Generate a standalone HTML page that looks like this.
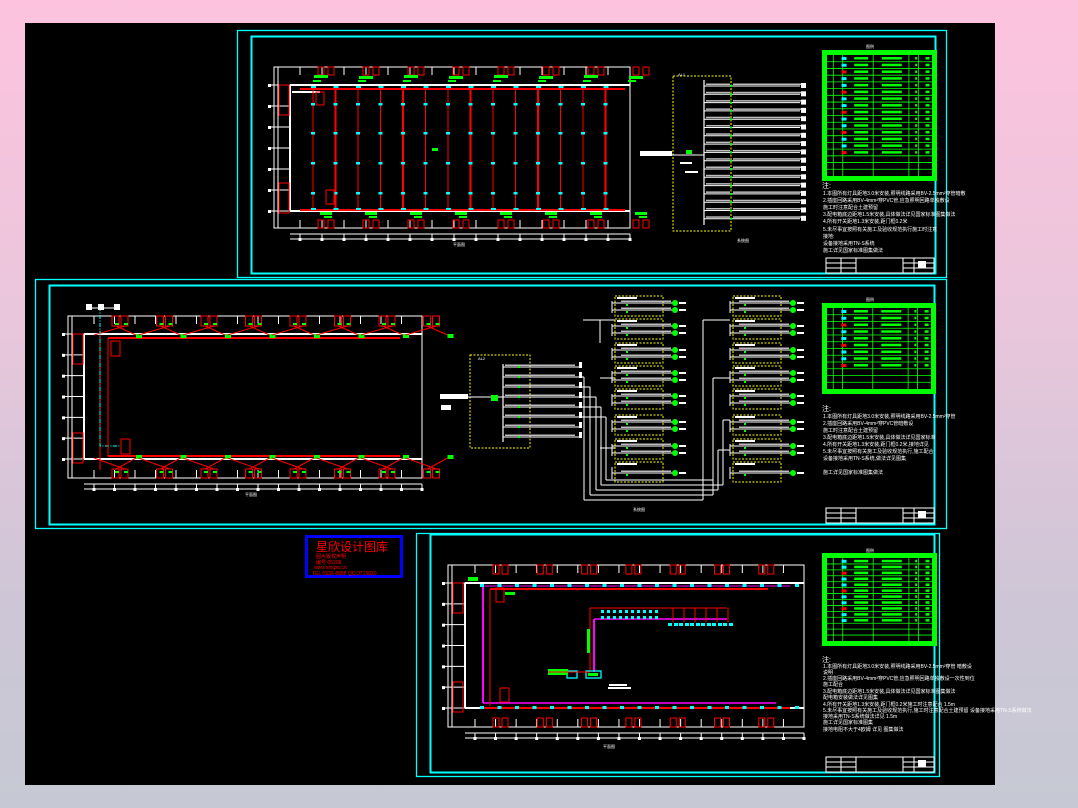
<!DOCTYPE html>
<html><head><meta charset="utf-8"><style>
html,body{margin:0;padding:0;width:1078px;height:808px;overflow:hidden;background:linear-gradient(#fdc3de 0%,#e9c6dc 40%,#cdc6d6 75%,#c6c9d3 100%);font-family:"Liberation Sans","Noto Sans CJK SC",sans-serif}
svg{position:absolute;left:0;top:0}
text{font-family:"Liberation Sans","Noto Sans CJK SC",sans-serif}
</style></head><body>
<svg id="s" width="1078" height="808" viewBox="0 0 1078 808">
<rect x="25" y="23" width="970" height="762" fill="#000"/>
<g fill="none" stroke="#00ffff" stroke-width="1.3">
<rect x="237.5" y="30.5" width="709" height="247"/>
<rect x="251.5" y="36.5" width="684" height="237" stroke-width="2"/>
<rect x="35.5" y="279.5" width="911" height="249"/>
<rect x="49.5" y="285.5" width="885" height="239" stroke-width="2"/>
<rect x="416.5" y="533.5" width="523" height="243"/>
<rect x="430.5" y="534.5" width="504" height="238" stroke-width="2"/>
</g>
<g id="g"></g>
<rect x="306.5" y="536.5" width="95" height="40" fill="#000" stroke="#0000ff" stroke-width="3"/>
<text x="316" y="551" fill="#ff0000" font-size="12">星欣设计图库</text>
<text x="316" y="558" fill="#ff0000" font-size="5">图片版权声明</text>
<text x="316" y="564" fill="#ff0000" font-size="5">编号:05208</text>
<text x="314" y="569" fill="#ff0000" font-size="5">www.xinqxs.cn</text>
<text x="312" y="575" fill="#ff0000" font-size="5">TEL:0536-8888 QQ:3715820</text>
<g fill="#fff" font-size="5">
<text x="822" y="188" font-size="7">注:</text>
<text x="823" y="195">1.本图所有灯具距地3.0米安装,照明线路采用BV-2.5mm²穿管暗敷</text>
<text x="823" y="202">2.插座回路采用BV-4mm²穿PVC管,应急照明回路单独敷设</text>
<text x="823" y="209">施工时注意配合土建预留</text>
<text x="823" y="216">3.配电箱底边距地1.5米安装,具体做法详见国家标准图集做法</text>
<text x="823" y="223">4.所有开关距地1.3米安装,距门框0.2米</text>
<text x="823" y="231">5.未尽事宜按照有关施工及验收规范执行施工时注意</text>
<text x="823" y="238">接地:</text>
<text x="823" y="245">设备接地采用TN-S系统</text>
<text x="823" y="252">施工详见国家标准图集做法</text>
<text x="822" y="411" font-size="7">注:</text>
<text x="823" y="418">1.本图所有灯具距地3.0米安装,照明线路采用BV-2.5mm²穿管</text>
<text x="823" y="425">2.插座回路采用BV-4mm²穿PVC管暗敷设</text>
<text x="823" y="432">施工时注意配合土建预留</text>
<text x="823" y="439">3.配电箱底边距地1.5米安装,具体做法详见国家标准</text>
<text x="823" y="446">4.所有开关距地1.3米安装,距门框0.2米,接地详见</text>
<text x="823" y="453">5.未尽事宜按照有关施工及验收规范执行,施工配合</text>
<text x="823" y="460">设备接地采用TN-S系统,做法详见图集</text>
<text x="823" y="474">施工详见国家标准图集做法</text>
<text x="822" y="662" font-size="7">注:</text>
<text x="823" y="668">1.本图所有灯具距地3.0米安装,照明线路采用BV-2.5mm²穿管 暗敷设</text>
<text x="823" y="674">说明</text>
<text x="823" y="680">2.插座回路采用BV-4mm²穿PVC管,应急照明回路单独敷设一次性到位</text>
<text x="823" y="686">施工配合</text>
<text x="823" y="693">3.配电箱底边距地1.5米安装,具体做法详见国家标准图集做法</text>
<text x="823" y="699">配电箱安装做法详见图集</text>
<text x="823" y="706">4.所有开关距地1.3米安装,距门框0.2米施工时注意配合 1.5m</text>
<text x="823" y="712">5.未尽事宜按照有关施工及验收规范执行,施工时注意配合土建预留 设备接地采用TN-S系统做法</text>
<text x="823" y="718">接地采用TN-S系统做法详见 1.5m</text>
<text x="823" y="724">施工详见国家标准图集</text>
<text x="823" y="731">接地电阻不大于4欧姆 详见 图集做法</text>
<text x="866" y="48" font-size="4">图例</text>
<text x="866" y="301" font-size="4">图例</text>
<text x="866" y="552" font-size="4">图例</text>
<text x="453" y="246" font-size="4">平面图</text>
<text x="737" y="242" font-size="4">系统图</text>
<text x="245" y="496" font-size="4">平面图</text>
<text x="633" y="511" font-size="4">系统图</text>
<text x="603" y="748" font-size="4">平面图</text>
<text x="678" y="76" font-size="4">AL1</text>
<text x="478" y="360" font-size="4">AL2</text>
</g>
</svg>
<script>
var g=document.getElementById('g'),h='';
function L(x1,y1,x2,y2,c,w){h+='<line x1="'+x1+'" y1="'+y1+'" x2="'+x2+'" y2="'+y2+'" stroke="'+c+'" stroke-width="'+(w||1)+'"/>';}
function R(x,y,w,hh,c,sw,f){h+='<rect x="'+x+'" y="'+y+'" width="'+w+'" height="'+hh+'" fill="'+(f||'none')+'" stroke="'+c+'" stroke-width="'+(sw||1)+'"'+(c=='#ffff00'?' stroke-dasharray="2,1.5"':'')+'/>';}
function F(x,y,w,hh,c){h+='<rect x="'+x+'" y="'+y+'" width="'+w+'" height="'+hh+'" fill="'+c+'"/>';}
var W='#fff',RD='#ff0000',GR='#00ff00',CY='#00ffff',Y='#ffff00',M='#ff00ff',GY='#bbb';
function plan(x0,y0,x1,y1,ix,iy0,iy1,nb){
 R(x0,y0,x1-x0,y1-y0,W,1);
 L(ix,iy0,ix,iy1,W,2);L(ix,iy0,x1,iy0,W,2);L(ix,iy1,x1,iy1,W,2);
 L(x0+4,y0,x0+4,y1,W,1);
 for(var i=0;i<7;i++){var yy=iy0+(iy1-iy0)*i/6;L(x0-4,yy,ix,yy,W,1);F(x0-6,yy-1,3,3,W);}
 var n=nb,sp=(x1-ix-10)/n;
 for(var i=0;i<=n;i++){var xx=ix+10+sp*i;L(xx,y0,xx,y0+8,W,1);L(xx,y1-8,xx,y1,W,1);L(xx,y1+6,xx,y1+12,W,1);F(xx-1.5,y1+10,3,3,W);}
 L(ix,y1+6,x1,y1+6,W,1);L(ix,y1+11,x1,y1+11,W,1);
 R(x0+5,y0+18,10,30,RD,1);R(x0+5,y1-45,10,30,RD,1);
}
plan(274,67,630,228,290,85,211,15);
L(300,89,625,89,RD,2);L(300,210,625,210,RD,2);L(292,92,320,92,W,2);
for(var i=0;i<14;i++){var xx=313+i*22.5;L(xx,89,xx,210,RD,i%3==1?2:1);
 [104,133,163,193].forEach(function(y){F(xx-2,y-1,4,2.5,CY);});
 F(xx-2,86,5,2,CY);F(xx-2,208,5,2,CY);}
for(var i=0;i<8;i++){var xx=318+i*45;R(xx,67,6,8,RD);R(xx+10,67,6,8,RD);R(xx,220,6,8,RD);R(xx+10,220,6,8,RD);
 F(xx-4,75+(i%2),14,3,GR);F(xx+2,212,12,3,GR);F(xx-5,80,8,2,GR);F(xx+6,216,8,2,GR);}
R(316,92,8,13,RD);R(326,190,8,14,RD);F(432,148,6,3,GR);
R(673,76,58,155,Y,1);L(704,80,704,225,W,1.2);
for(var i=0;i<17;i++){var y=84+i*8.3;L(704,y+2,800,y+2,W,1);F(706,y-0.5,24,1.5,GY);F(733,y-0.5,68,1.5,GY);F(730,y+1,2,2,GR);F(801,y-1,5,5,W);}
L(640,155,704,155,W,1);F(640,151,32,5,W);F(686,150,6,4,GR);F(680,162,12,2,W);F(685,171,13,2,W);
function table(x,y,w,hh,rows){F(x,y,w,hh,GR);F(x+5,y+5,w-10,hh-10,'#000');
 for(var i=1;i<rows;i++){var yy=y+5+(hh-10)*i/rows;L(x+5,yy,x+w-5,yy,GR,0.8);}
 [0.06,0.15,0.44,0.78,0.87].forEach(function(f){L(x+5+(w-10)*f,y+5,x+5+(w-10)*f,y+hh-5,GR,0.8);});
 for(var i=0;i<rows-3;i++){var yy=y+5+(hh-10)*(i+0.3)/rows;F(x+w*0.17,yy,5,3,i%3==2?RD:CY);F(x+w*0.28,yy,14,2.5,GR);F(x+w*0.52,yy,20,2.5,GR);F(x+w*0.81,yy,2,2.5,GR);F(x+w*0.9,yy,4,2.5,GR);}}
table(822,50,115,131,18);
table(822,303,114,91,12);
table(822,553,115,93,14);
function tb(x,y){R(x,y,108,15,W,1);L(x+15,y,x+15,y+15,W,1);L(x+30,y,x+30,y+15,W,1);L(x+77,y,x+77,y+15,W,1);L(x+88,y,x+88,y+15,W,1);L(x,y+5,x+30,y+5,W,1);L(x,y+10,x+30,y+10,W,1);L(x+77,y+5,x+108,y+5,W,1);L(x+77,y+10,x+108,y+10,W,1);F(x+92,y+3,8,7,W);}
tb(826,258);tb(826,508);tb(826,757);
plan(68,316,422,478,84,334,459,16);
L(108,338,400,338,RD,2);L(108,456,400,456,RD,2);L(100,330,100,470,RD,1);
for(var i=0;i<8;i++){var xx=112+i*44.5;R(xx,316,7,10,RD);R(xx+9,316,7,10,RD);R(xx,469,7,9,RD);R(xx+9,469,7,9,RD);
 L(xx+4,326,xx+24,335,RD,1);L(xx+13,326,xx-18,335,RD,1);L(xx+4,469,xx+24,458,RD,1);L(xx+13,469,xx-18,458,RD,1);
 F(xx+24,334,6,4,GR);F(xx+24,455,6,4,GR);F(xx+3,323,4,2,GR);F(xx+12,323,4,2,GR);F(xx+3,471,4,2,GR);F(xx+12,471,4,2,GR);}
h+='<path d="M100 307 V446 H120" stroke="#00ffff" stroke-dasharray="4,1.5,1,1.5" fill="none"/>';
L(91,308,115,308,W,1);F(86,304,6,6,W);F(98,304,6,6,W);F(114,304,6,6,W);
R(111,341,9,15,RD);R(121,439,9,15,RD);L(108,338,108,456,RD,1);
R(470,355,60,93,Y,1);L(503,364,503,442,W,1.2);L(440,397,503,397,W,1);F(440,394,28,5,W);F(491,395,7,6,GR);F(441,405,10,5,W);
for(var i=0;i<8;i++){var y=367+i*10;L(503,y,580,y,W,1);F(505,y-2.5,70,1.5,GY);F(518,y-1,2,2,GR);F(579,y-5,3,6,W);}
[[580,377,584,500],[580,387,590,495],[580,397,596,490],[580,407,601,485],[580,417,606,480]].forEach(function(a){L(a[0],a[1],a[2],a[1],W,1);L(a[2],a[1],a[2],a[3],W,1);});
L(584,500,703,500,W,1);L(590,495,713,495,W,1);L(596,490,718,490,W,1);L(601,485,723,485,W,1);L(606,480,713,480,W,1);
L(703,500,703,320,W,1);L(703,320,730,320,W,1);L(713,495,713,378,W,1);L(713,378,730,378,W,1);L(718,490,718,450,W,1);L(718,450,730,450,W,1);L(723,485,723,420,W,1);L(723,420,730,420,W,1);
L(600,320,600,343,W,1);L(583,320,615,320,W,1);L(600,378,615,378,W,1);L(600,448,615,448,W,1);
var bys=[296,319,343,366,389,415,439,462];
[615,733].forEach(function(bx){bys.forEach(function(by,k){R(bx,by,48,20,Y,1);F(bx+2,by+1,20,2,W);
 var ys=k==7?[by+11]:[by+7,by+14];L(bx-3,by+5,bx-3,by+17,W,1);ys.forEach(function(yy){L(bx-3,yy,bx+58,yy,W,1);F(bx+6,yy-2.5,50,1.5,GY);F(bx+11,yy+1,2,2,GR);h+='<circle cx="'+(bx+60)+'" cy="'+yy+'" r="3" fill="#00ff00"/>';F(bx+64,yy-1,7,2,W);});});});
plan(448,565,804,727,465,583,708,16);
L(490,589,768,589,RD,2);L(483,708,790,708,RD,2);L(483,586,483,703,M,2);L(483,703,776,703,M,1.5);L(484,586,790,586,M,1);L(490,589,490,706,RD,1);
for(var i=0;i<7;i++){var xx=493+i*44.3;R(xx,565,6,9,RD);R(xx+9,565,6,9,RD);R(xx,718,6,9,RD);R(xx+9,718,6,9,RD);}
for(var i=0;i<19;i++){var xx=480+i*17.5;F(xx,584,4,3,CY);F(xx,706,4,3,CY);}
L(590,608,727,608,RD,1);L(590,608,590,672,RD,1);L(594,619,727,619,M,1.5);L(594,619,594,672,M,2);
for(var i=0;i<10;i++){F(601+i*6,610,3,3,CY);F(601+i*6,616,3,3,CY);}
for(var i=0;i<6;i++){L(673+i*11,608,673+i*11,622,RD,1);F(668+i*11,623,4,3,CY);F(674+i*11,623,4,3,CY);}
F(587,629,3,24,GR);R(567,671,10,7,CY,1.3);R(586,671,15,7,CY,1.3);F(588,673,10,3,GR);F(548,669,20,6,GR);L(548,672,590,672,RD,1);F(608,687,23,2,W);F(609,684,18,2,W);
R(496,588,8,14,RD);R(500,688,9,14,RD);F(468,577,10,4,GR);F(505,592,10,3,GR);
g.innerHTML=h;
</script>
</body></html>
